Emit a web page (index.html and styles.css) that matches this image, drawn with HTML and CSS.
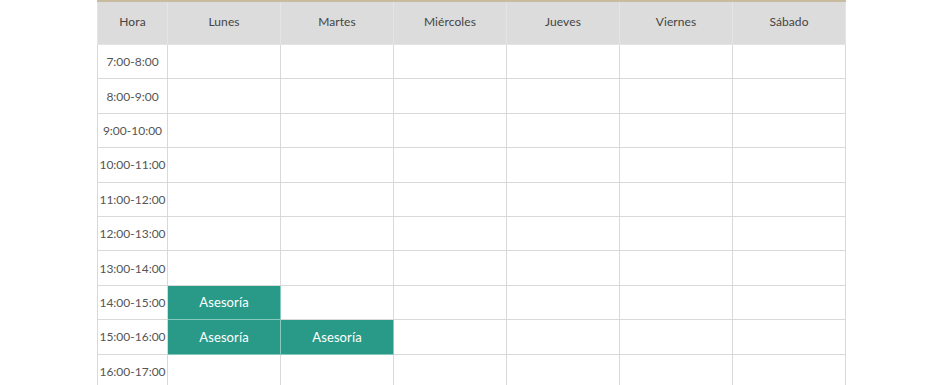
FILE: index.html
```html
<!DOCTYPE html>
<html lang="es">
<head>
<meta charset="utf-8">
<link rel="stylesheet" href="styles.css">
</head>
<body>
<div class="wrap">
<table class="horario">
  <colgroup>
    <col class="c-hora"><col><col><col><col><col><col>
  </colgroup>
  <thead>
    <tr><th>Hora</th><th>Lunes</th><th>Martes</th><th>Miércoles</th><th>Jueves</th><th>Viernes</th><th>Sábado</th></tr>
  </thead>
  <tbody>
    <tr><td class="h">7:00-8:00</td><td></td><td></td><td></td><td></td><td></td><td></td></tr>
    <tr><td class="h">8:00-9:00</td><td></td><td></td><td></td><td></td><td></td><td></td></tr>
    <tr><td class="h">9:00-10:00</td><td></td><td></td><td></td><td></td><td></td><td></td></tr>
    <tr><td class="h">10:00-11:00</td><td></td><td></td><td></td><td></td><td></td><td></td></tr>
    <tr><td class="h">11:00-12:00</td><td></td><td></td><td></td><td></td><td></td><td></td></tr>
    <tr><td class="h">12:00-13:00</td><td></td><td></td><td></td><td></td><td></td><td></td></tr>
    <tr><td class="h">13:00-14:00</td><td></td><td></td><td></td><td></td><td></td><td></td></tr>
    <tr><td class="h">14:00-15:00</td><td class="ev">Asesoría</td><td></td><td></td><td></td><td></td><td></td></tr>
    <tr><td class="h">15:00-16:00</td><td class="ev">Asesoría</td><td class="ev">Asesoría</td><td></td><td></td><td></td><td></td></tr>
    <tr><td class="h">16:00-17:00</td><td></td><td></td><td></td><td></td><td></td><td></td></tr>
  </tbody>
</table>
</div>
</body>
</html>
```
FILE: styles.css
```css
html, body {
  margin: 0;
  padding: 0;
  background: #fff;
}
body {
  font-family: Lato, "Open Sans", sans-serif;
  overflow: hidden;
}
.wrap {
  padding-left: 97px;
}
.horario {
  table-layout: fixed;
  border-collapse: collapse;
  width: 749px;
  border-top: 2px solid #c9bb9f;
}
.c-hora { width: 70px; }
.horario th,
.horario td {
  border: 1px solid #d9d9d9;
  text-align: center;
  vertical-align: middle;
  padding: 0;
  font-size: 12px;
  color: #4a4a4a;
}
.horario th {
  background: #dcdcdc;
  font-weight: 400;
  height: 39px;
  padding-bottom: 3px;
  color: #444;
  border-top: 0;
  border-color: #e4e4e4;
  letter-spacing: 0.1px;
}
.horario td {
  height: 33.4px;
}
.horario td.h {
  color: #555;
  font-size: 12px;
}
.horario td.ev {
  background: #2a9a88;
  color: #fff;
  font-size: 13px;
  letter-spacing: 0.1px;
  border-color: #86c9bd;
}
```
